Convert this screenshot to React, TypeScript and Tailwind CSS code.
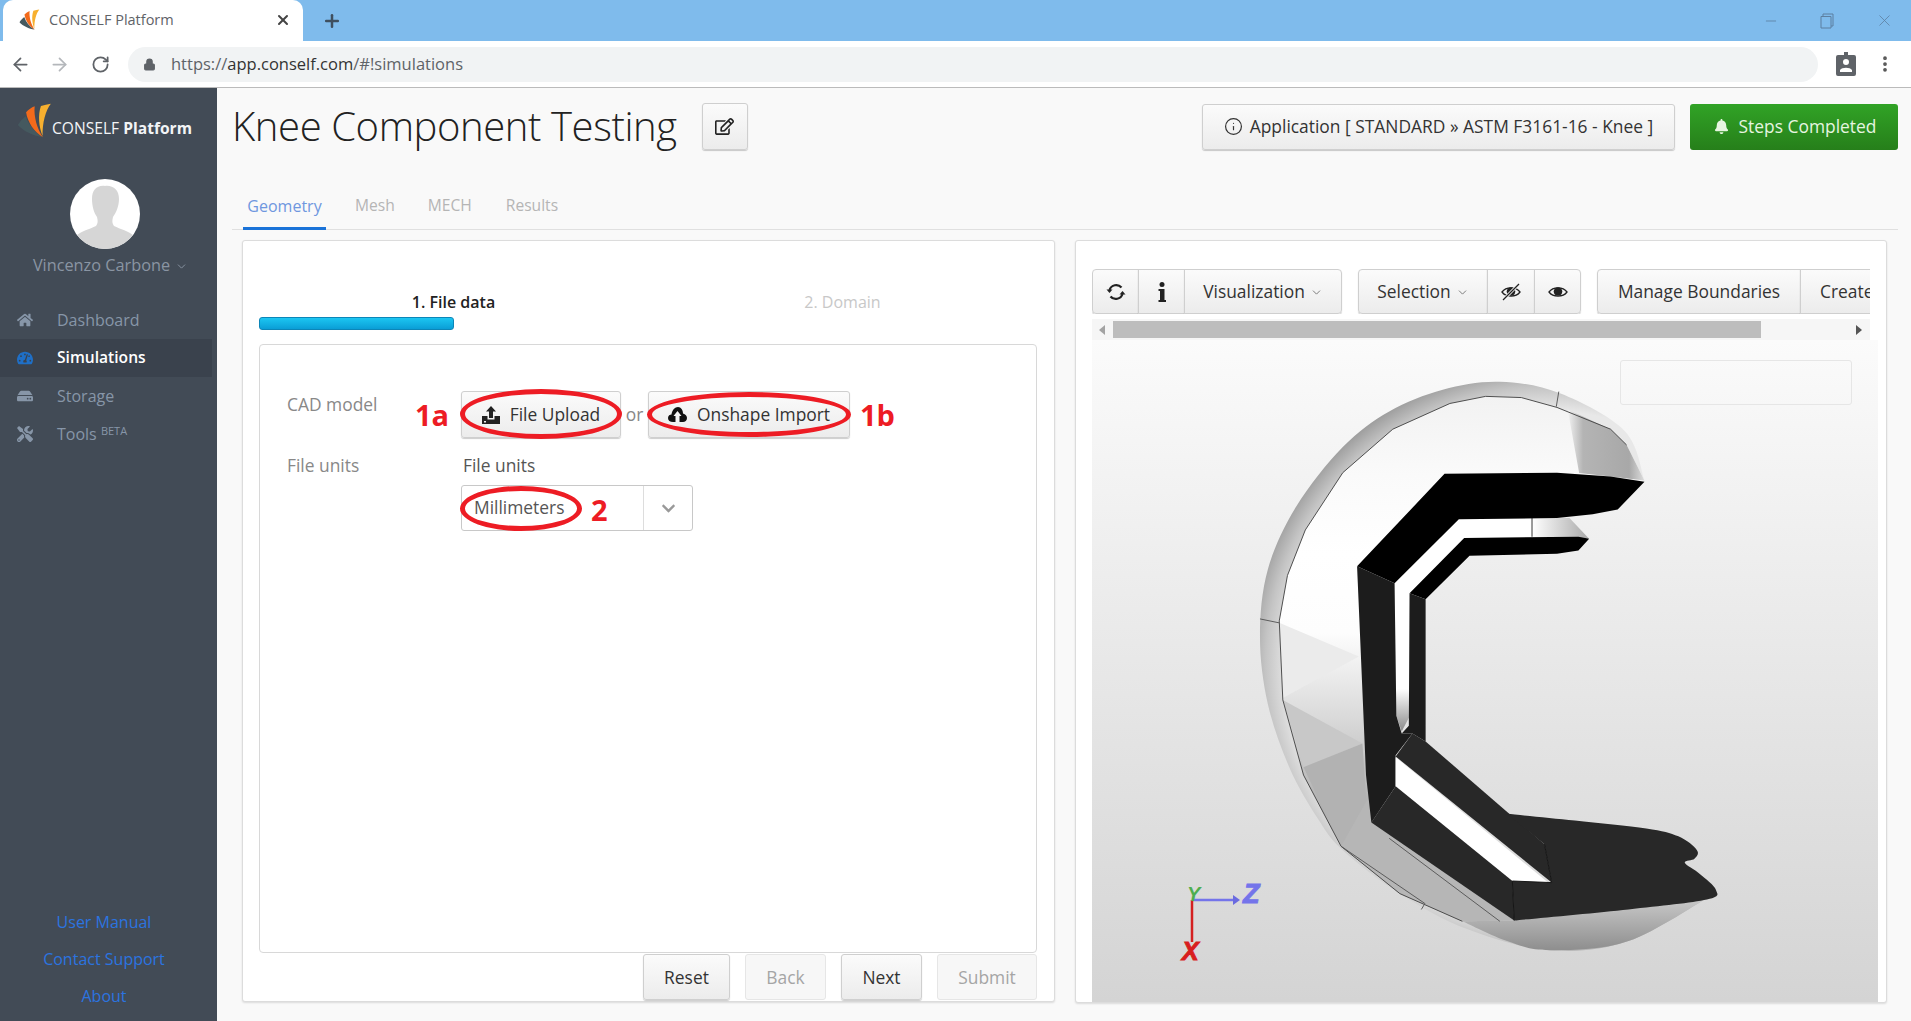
import { ArrowLeft, ArrowRight, ChevronDown, Info, Lock, Minus, MoreVertical, Plus, RotateCw, X } from "lucide-react";
import { FaBell, FaChevronDown, FaHdd, FaHome, FaRegEdit, FaTachometerAlt, FaTools } from "react-icons/fa";
import type { ReactNode } from "react";

const btn =
  "flex items-center justify-center border border-[#cfcfcf] bg-gradient-to-b from-[#fbfbfb] to-[#ececec] text-[#333] shadow-[0_1px_1px_rgba(0,0,0,0.2)]";

function Logo({ className }: { className: string }) {
  return (
    <svg viewBox="20 18 105 106" className={className}>
      <path d="M22 85 C28 75 36 65 46 58 C55 85 72 105 98 122 C70 118 40 105 22 85Z" fill="#45595f" />
      <path d="M47 46 C55 38 63 32 73 28 C70 60 80 95 98 122 C72 105 52 78 47 46Z" fill="#f26a1b" />
      <path d="M92 27 C102 24 112 22 122 20 C106 40 96 78 97 118 C86 90 82 55 92 27Z" fill="#f7b02f" />
    </svg>
  );
}

function RefreshIcon() {
  return (
    <svg viewBox="0 0 20 20" className="h-[20px] w-[20px]" fill="none" stroke="#222" strokeWidth="2.2">
      <path d="M3.5 8 A7 7 0 0 1 15.5 5.5" />
      <path d="M16.5 12 A7 7 0 0 1 4.5 14.5" />
      <path d="M0.5 7.5 H6.5 L3.5 11Z" fill="#222" stroke="none" />
      <path d="M13.5 12.5 H19.5 L16.5 9Z" fill="#222" stroke="none" />
    </svg>
  );
}

function InfoGlyph() {
  return (
    <svg viewBox="0 0 10 20" className="h-[20px] w-[10px]" fill="#222">
      <circle cx="5" cy="2.5" r="2.5" />
      <path d="M1.5 7 H7.5 V18 H9 V20 H1.5 V18 H3 V9 H1.5Z" />
    </svg>
  );
}

function EyeIcon({ slashed }: { slashed?: boolean }) {
  return (
    <svg viewBox="0 0 20 18" className="h-[18px] w-[20px]" fill="none" stroke="#222" strokeWidth="1.3">
      <path d="M1 9 C5 3.5 15 3.5 19 9 C15 14.5 5 14.5 1 9Z" />
      <circle cx="10" cy="8.5" r="4.3" fill="#222" stroke="none" />
      {slashed && <path d="M2 17 L18 1" stroke="#f4f4f4" strokeWidth="3" />}
      {slashed && <path d="M2 17 L18 1" />}
    </svg>
  );
}

function UploadIcon() {
  return (
    <svg viewBox="0 0 18 18" className="h-[18px] w-[18px]" fill="#222">
      <path d="M9 0 L14 5.5 H11 V12 H7 V5.5 H4Z" />
      <path d="M0 10 H5.5 V13.5 H12.5 V10 H18 V18 H0Z M2 15 V16.5 H4 V15Z" fillRule="evenodd" />
    </svg>
  );
}

function CloudUploadIcon() {
  return (
    <svg viewBox="0 0 19 16" className="h-[16px] w-[19px]" fill="#111">
      <path d="M5 15 C2 15 0 13.5 0 11 C0 8.5 2 7.5 3.5 7.5 C4 3 7 0 10 0 C13 0 15 3 15 6.5 C17.5 7 19 9 19 11 C19 13.5 17 15 15 15Z" />
      <path d="M9.5 4 L13.5 9 H11.5 V15 H7.5 V9 H5.5Z" fill="#f5f5f5" />
    </svg>
  );
}

function NavItem({ icon, label, active }: { icon: ReactNode; label: ReactNode; active?: boolean }) {
  return (
    <div
      className={`flex h-[38px] w-[212px] items-center gap-[24px] pl-[17px] ${
        active ? "bg-[#3a424d] text-[15.6px] font-semibold text-white" : "text-[16px] text-[#8796a8]"
      }`}
    >
      <span className="flex w-[16px] justify-center text-[16px]">{icon}</span>
      <span>{label}</span>
    </div>
  );
}

function Sidebar() {
  return (
    <aside className="flex w-[217px] shrink-0 flex-col bg-[#424b56]">
      <div className="flex h-[50px] items-end pl-[17px] pt-[15px]">
        <Logo className="h-[35px] w-[35px]" />
        <span className="mb-[-2px] whitespace-nowrap text-[15.6px] text-[#f2f4f6]">
          CONSELF <b>Platform</b>
        </span>
      </div>
      <div className="mt-[41px] flex flex-col items-center">
        <div className="mr-[7px] h-[70px] w-[70px] overflow-hidden rounded-full bg-white">
          <svg viewBox="0 0 70 70" className="h-full w-full">
            <path
              d="M35 7 C27 6 22 11 22 20 C22 27 24 34 27 38 C28 42 28 44 26 47 C20 50 11 52 6 57 L6 70 L64 70 L64 57 C59 52 50 50 44 47 C42 44 42 42 43 38 C46 34 49 27 49 20 C49 11 43 6 35 7Z"
              fill="#d6d6d6"
            />
          </svg>
        </div>
        <div className="ml-[4px] mt-[5px] flex items-center gap-[5px] text-[16.3px] leading-[22px] text-[#8a95a3]">
          Vincenzo Carbone
          <ChevronDown className="mt-[2px] h-[13px] w-[13px]" strokeWidth={1.75} />
        </div>
      </div>
      <nav className="mt-[25px] flex flex-col">
        <NavItem icon={<FaHome />} label="Dashboard" />
        <NavItem icon={<FaTachometerAlt className="text-[#1f6fc6]" />} label="Simulations" active />
        <NavItem icon={<FaHdd />} label="Storage" />
        <NavItem
          icon={<FaTools />}
          label={
            <>
              Tools <sup className="text-[11px]">BETA</sup>
            </>
          }
        />
      </nav>
      <div className="mt-auto flex flex-col items-center gap-[15px] pb-[14px] pr-[9px] text-[16px] leading-[22px] text-[#2b74e0]">
        <a>User Manual</a>
        <a>Contact Support</a>
        <a>About</a>
      </div>
    </aside>
  );
}

function Ellipse({ className }: { className: string }) {
  return <span className={`absolute rounded-[50%] border-[5px] border-[#ed1c24] ${className}`} />;
}

function Note({ children, className }: { children: ReactNode; className?: string }) {
  return <span className={`text-[29px] font-bold leading-none text-[#ed1c24] ${className ?? ""}`}>{children}</span>;
}

function GeometryPanel() {
  return (
    <section className="flex h-[762px] w-[813px] shrink-0 flex-col rounded-[3px] border border-[#dcdcdc] bg-white pl-[16px] pr-[17px] shadow-[0_1px_2px_rgba(0,0,0,0.12)]">
      <div className="mt-[50px] grid grid-cols-2 text-center text-[16px] leading-[22px]">
        <span className="font-semibold text-[#222]">1. File data</span>
        <span className="text-[#c8c8c8]">2. Domain</span>
      </div>
      <div className="mt-[4px] h-[13px] w-[195px] rounded-[3px] border border-[#0c86b8] bg-gradient-to-b from-[#1cc6f2] to-[#0a9ed6]" />
      <div className="mt-[14px] h-[609px] rounded-[4px] border border-[#d8d8d8] bg-white pl-[27px] pt-[46px] text-[17.4px] text-[#888]">
        <div className="flex h-[47px]">
          <span className="mt-[1px] w-[128px] leading-[24px]">CAD model</span>
          <Note className="mt-[9px] w-[46px]">1a</Note>
          <div className={`${btn} relative h-[47px] w-[160px] gap-[10px] rounded-[3px]`}>
            <UploadIcon />
            File Upload
            <Ellipse className="inset-x-[-2px] inset-y-[-3px] h-[50px]" />
          </div>
          <span className="w-[27px] pt-[10px] text-center">or</span>
          <div className={`${btn} relative h-[47px] w-[202px] gap-[10px] rounded-[3px]`}>
            <CloudUploadIcon />
            Onshape Import
            <Ellipse className="inset-x-[-2px] inset-y-0" />
          </div>
          <Note className="ml-[10px] mt-[9px]">1b</Note>
        </div>
        <div className="mt-[15px] flex">
          <span className="w-[174px] leading-[24px]">File units</span>
          <div className="flex flex-col">
            <span className="pl-[2px] leading-[24px] text-[#555]">File units</span>
            <div className="relative mt-[8px] flex h-[46px] w-[232px] items-center rounded-[3px] border border-[#c8c8c8] bg-white pb-[2px] pl-[12px] text-[#555]">
              Millimeters
              <span className="ml-auto flex h-[44px] w-[49px] items-center justify-center self-start border-l border-[#ddd]">
                <FaChevronDown className="text-[15px] text-[#999]" />
              </span>
              <Ellipse className="left-[-2px] top-0 h-[45px] w-[122px]" />
              <Note className="absolute left-[129px] top-[9px]">2</Note>
            </div>
          </div>
        </div>
      </div>
      <div className="mt-px flex justify-end gap-[14px] text-[17.4px]">
        <div className={`${btn} mr-px h-[46px] w-[87px] rounded-[3px] border-[#c4c4c4] text-[#222]`}>Reset</div>
        <div className="mr-px flex h-[46px] w-[81px] items-center justify-center rounded-[3px] border border-[#e6e6e6] bg-[#f7f7f7] text-[#a5a5a5]">Back</div>
        <div className={`${btn} h-[46px] w-[81px] rounded-[3px] border-[#c4c4c4] text-[#222]`}>Next</div>
        <div className="ml-px flex h-[46px] w-[100px] items-center justify-center rounded-[3px] border border-[#e6e6e6] bg-[#f7f7f7] text-[#a5a5a5]">Submit</div>
      </div>
    </section>
  );
}

function Toolbar() {
  const chevron = <ChevronDown className="ml-[5px] mt-[2px] h-[13px] w-[13px] text-[#777]" strokeWidth={1.75} />;
  return (
    <div className="flex h-[45px] w-[778px] gap-[16px] overflow-hidden text-[17.4px]">
      <div className="flex shrink-0">
        <div className={`${btn} h-[45px] w-[47px] rounded-l-[4px]`}>
          <RefreshIcon />
        </div>
        <div className={`${btn} ml-[-1px] h-[45px] w-[47px]`}>
          <InfoGlyph />
        </div>
        <div className={`${btn} ml-[-1px] h-[45px] w-[158px] rounded-r-[4px]`}>Visualization{chevron}</div>
      </div>
      <div className="flex shrink-0">
        <div className={`${btn} h-[45px] w-[130px] rounded-l-[4px]`}>Selection{chevron}</div>
        <div className={`${btn} ml-[-1px] h-[45px] w-[48px]`}>
          <EyeIcon slashed />
        </div>
        <div className={`${btn} ml-[-1px] h-[45px] w-[47px] rounded-r-[4px]`}>
          <EyeIcon />
        </div>
      </div>
      <div className="flex shrink-0">
        <div className={`${btn} h-[45px] w-[204px] rounded-l-[4px]`}>Manage Boundaries</div>
        <div className={`${btn} ml-[-1px] h-[45px] w-[130px] justify-start pl-[19px]`}>Create</div>
      </div>
    </div>
  );
}

// Smooth open curve through the points (Catmull-Rom)
function smooth(p: number[][]) {
  let d = `M${p[0][0]} ${p[0][1]}`;
  for (let i = 0; i < p.length - 1; i++) {
    const a = p[Math.max(i - 1, 0)];
    const b = p[i];
    const c = p[i + 1];
    const e = p[Math.min(i + 2, p.length - 1)];
    d += `C${b[0] + (c[0] - a[0]) / 6} ${b[1] + (c[1] - a[1]) / 6} ${c[0] - (e[0] - b[0]) / 6} ${c[1] - (e[1] - b[1]) / 6} ${c[0]} ${c[1]}`;
  }
  return d;
}

const outer = [
  [1245, 305], [1190, 180], [1010, 85], [840, 55], [680, 75], [530, 130], [400, 220], [270, 370], [190, 530],
  [168, 700], [190, 870], [250, 1030], [330, 1160], [400, 1240], [560, 1350], [750, 1440], [980, 1493],
  [1200, 1470], [1440, 1350],
];

const edge =
  "1195,215 1150,175 1000,120 900,95 800,92 700,110 540,175 400,285 295,430 245,545 222,660 232,860 290,1050 395,1230 560,1350 735,1420";

function Model() {
  return (
    <svg viewBox="1092 340 786 662" className="absolute inset-0 h-full w-full">
      <defs>
        <radialGradient
          id="rim"
          gradientUnits="userSpaceOnUse"
          cx="0"
          cy="0"
          r="1"
          gradientTransform="translate(964 774) scale(840 760)"
        >
          <stop offset="0.85" stopColor="#e8e8e8" />
          <stop offset="0.93" stopColor="#c4c4c4" />
          <stop offset="1" stopColor="#9a9a9a" />
        </radialGradient>
        <linearGradient id="face" x1="0" y1="0" x2="0" y2="1">
          <stop offset="0" stopColor="#f2f2f2" />
          <stop offset="0.15" stopColor="#fafafa" />
          <stop offset="0.3" stopColor="#ffffff" />
          <stop offset="0.45" stopColor="#fdfdfd" />
          <stop offset="0.62" stopColor="#d8d8d8" />
          <stop offset="0.78" stopColor="#b0b0b0" />
          <stop offset="1" stopColor="#bcbcbc" />
        </linearGradient>
        <linearGradient id="cap" x1="0" y1="0" x2="1" y2="0">
          <stop offset="0" stopColor="#f2f2f2" />
          <stop offset="0.2" stopColor="#b4b4b4" />
          <stop offset="0.8" stopColor="#a8a8a8" />
          <stop offset="1" stopColor="#dddddd" />
        </linearGradient>
        <linearGradient id="slot" x1="0" y1="0" x2="0" y2="1">
          <stop offset="0.8" stopColor="#ffffff" />
          <stop offset="1" stopColor="#8a8a8a" />
        </linearGradient>
        <linearGradient id="tip" x1="0" y1="0" x2="1" y2="0">
          <stop offset="0" stopColor="#ffffff" />
          <stop offset="1" stopColor="#a8a8a8" />
        </linearGradient>
        <linearGradient id="belly" x1="0" y1="0" x2="0" y2="1">
          <stop offset="0" stopColor="#cfcfcf" />
          <stop offset="1" stopColor="#8e8e8e" />
        </linearGradient>
      </defs>
      <g transform="translate(1200 360) scale(0.357 0.3953)">
        <path d={smooth(outer) + "L880 1400 L480 1000 L500 500 L800 290Z"} fill="url(#rim)" />
        <path d={smooth([[735, 1420], [860, 1470], [980, 1493], [1200, 1470], [1440, 1350]]) + "L1200 1385 L880 1418Z"} fill="url(#belly)" />
        <polygon points={`1245,305 ${edge} 880,1418 480,1170 440,522 685,288`} fill="url(#face)" />
        <polygon points="1030,125 1150,175 1195,215 1245,305 1150,295 1062,286" fill="url(#cap)" />
        <polygon points="222,665 445,750 232,855" fill="#ebebeb" />
        <polygon points="232,860 455,970 290,1030" fill="#c8c8c8" />
        <polygon points="290,1030 455,970 470,1170 395,1230" fill="#b2b2b2" />
        <polygon points="395,1230 470,1110 880,1418 735,1420 560,1350" fill="#b6b6b6" />
        <polyline points={edge} fill="none" stroke="#444" strokeWidth="2.5" />
        <path
          d="M168 655 L222 665 M1005 80 L998 118 M395 1230 L630 1375 L620 1390 M530 1210 L840 1420"
          stroke="#555"
          strokeWidth="2.5"
          fill="none"
        />
        {/* white opening behind the C */}
        <polygon points="725,403 1030,400 1090,452 740,450 587,590 588,900 565,940 550,900 545,565" fill="url(#slot)" />
        <polygon points="930,400 1035,400 1090,452 930,447" fill="url(#tip)" />
        <path d="M930 400 L930 447" stroke="#444" strokeWidth="3" />
        {/* top bands */}
        <polygon points="685,288 1000,285 1150,295 1245,308 1170,378 1100,390 1000,400 725,403 545,565 440,522" fill="#000" />
        <polygon points="740,450 1060,447 1090,452 1060,482 1000,490 755,495 632,605 587,590" fill="#000" />
        {/* vertical bands */}
        <polygon points="440,522 545,565 550,900 565,945 595,945 548,1000 548,1078 480,1170 465,1050" fill="#1c1c1c" />
        <polygon points="587,590 632,605 632,965 595,945 565,945 585,925" fill="#1c1c1c" />
        {/* lower arms and foot */}
        <polygon points="595,945 632,965 965,1225 985,1322 548,1003" fill="#282828" />
        <polygon points="548,1005 975,1322 875,1318 548,1078" fill="#ffffff" />
        <polygon points="548,1078 875,1318 880,1418 480,1170" fill="#282828" />
        <path
          d={
            smooth([
              [860, 1148], [1050, 1165], [1250, 1185], [1340, 1205], [1392, 1240], [1385, 1262], [1358, 1272], [1400, 1300],
              [1445, 1340], [1420, 1365], [1200, 1390], [880, 1418],
            ]) + "L875 1318 L985 1322 L965 1225Z"
          }
          fill="#282828"
        />
        <path d="M875 1318 L880 1418 M965 1225 L985 1322 L875 1318" stroke="#111" strokeWidth="2.5" fill="none" />
      </g>
      {/* axes */}
      <path d="M1192 900 L1235 900" stroke="#7474ea" strokeWidth="2.5" />
      <path d="M1233 895 L1240 900 L1233 905Z" fill="#6a6ae0" />
      <path d="M1192 900 L1192 942" stroke="#d42020" strokeWidth="2.5" />
      <text x="1187" y="901" fontFamily="Liberation Sans" fontWeight="700" fontStyle="italic" fontSize="20" fill="#4fae4f">Y</text>
      <text x="1243" y="903" fontFamily="Liberation Sans" fontWeight="700" fontStyle="italic" fontSize="27" fill="#7474ea" stroke="#7474ea">Z</text>
      <text x="1182" y="960" fontFamily="Liberation Sans" fontWeight="700" fontStyle="italic" fontSize="25" fill="#d81e1e" stroke="#d81e1e">X</text>
    </svg>
  );
}

function ViewerPanel() {
  return (
    <section className="flex h-[763px] w-[812px] shrink-0 flex-col rounded-[3px] border border-[#dcdcdc] bg-white pl-[16px] pt-[28px] shadow-[0_1px_2px_rgba(0,0,0,0.12)]">
      <Toolbar />
      <div className="mt-[5px] flex h-[21px] w-[778px] items-center bg-[#f6f6f6] pl-[7px] pr-[8px]">
        <span className="h-0 w-0 border-y-[5px] border-r-[6px] border-y-transparent border-r-[#a3a3a3]" />
        <span className="ml-[8px] h-[17px] w-[648px] bg-[#bdbdbd]" />
        <span className="ml-auto h-0 w-0 border-y-[5px] border-l-[6px] border-y-transparent border-l-[#555]" />
      </div>
      <div className="relative h-[662px] w-[786px] bg-gradient-to-b from-[#fbfbfb] to-[#d4d4d4]">
        <Model />
        <div className="absolute left-[528px] top-[20px] h-[45px] w-[232px] rounded-[3px] border border-[#e6e6e6]" />
      </div>
    </section>
  );
}

export default function App() {
  return (
    <div className="flex h-[1021px] w-[1911px] flex-col overflow-hidden bg-[#f9f9f9] font-['Open_Sans',sans-serif]">
      <div className="flex h-[41px] shrink-0 items-center bg-[#7fbbec] pl-[3px] text-[#555]">
        <div className="flex h-[41px] w-[300px] items-center rounded-t-[10px] bg-white pb-[2px] pl-[16px] pr-[12px]">
          <Logo className="h-[21px] w-[21px]" />
          <span className="ml-[9px] text-[14.5px] text-[#5f6368]">CONSELF Platform</span>
          <X className="ml-auto h-[16px] w-[16px] text-[#444]" strokeWidth={3} />
        </div>
        <Plus className="ml-[19px] h-[20px] w-[20px] text-[#3f4f5f]" strokeWidth={3} />
        <div className="ml-auto flex items-center gap-[41px] pr-[17px] text-[#5d7fa0]">
          <Minus className="h-[16px] w-[16px]" strokeWidth={1.25} />
          <svg viewBox="0 0 14 16" className="h-[16px] w-[14px]" fill="none" stroke="currentColor">
            <path d="M3 3 V1 H13 V13 H11 M1 3.5 H11 V15 H1Z" />
          </svg>
          <X className="h-[19px] w-[19px]" strokeWidth={1} />
        </div>
      </div>
      <div className="flex h-[47px] shrink-0 items-center border-b border-[#bbb] bg-white text-[#5f6368]">
        <ArrowLeft className="ml-[10px] h-[21px] w-[21px]" strokeWidth={2} />
        <ArrowRight className="ml-[18px] h-[21px] w-[21px] text-[#b4b7bb]" strokeWidth={2} />
        <RotateCw className="ml-[21px] h-[19px] w-[19px]" strokeWidth={2.25} />
        <div className="ml-[18px] flex h-[35px] w-[1690px] items-center rounded-full bg-[#f1f3f4] pl-[15px] text-[16.5px]">
          <Lock className="h-[13px] w-[13px] fill-[#5f6368]" />
          <span className="ml-[15px]">
            https://<span className="text-[#333]">app.conself.com</span>/#!simulations
          </span>
        </div>
        <svg viewBox="0 0 20 24" className="ml-[18px] h-[24px] w-[20px]">
          <path
            fill="#5f6368"
            d="M8 0H12V3H18Q20 3 20 5V22Q20 24 18 24H2Q0 24 0 22V5Q0 3 2 3H8ZM10 7A3 3 0 1 0 10 13 3 3 0 0 0 10 7ZM4 20H16V18C14 15 6 15 4 18Z"
          />
        </svg>
        <MoreVertical className="ml-[19px] h-[20px] w-[20px] text-[#555]" strokeWidth={2.5} />
      </div>
      <div className="flex min-h-0 flex-1">
        <Sidebar />
        <main className="flex min-w-0 flex-1 flex-col pl-[15px] pr-[13px]">
          <header className="flex h-[62px] shrink-0 items-end justify-between">
            <div className="flex items-center">
              <h1 className="mb-[1px] text-[40px] font-light leading-[47px] tracking-[-0.4px] text-[#222]">Knee Component Testing</h1>
              <div className={`${btn} ml-[25px] h-[47px] w-[46px] rounded-[3px]`}>
                <FaRegEdit className="text-[19px] text-[#222]" />
              </div>
            </div>
            <div className="flex gap-[15px] text-[17.4px]">
              <div className={`${btn} h-[46px] w-[473px] gap-[7px] rounded-[3px] pb-[2px]`}>
                <Info className="h-[19px] w-[19px]" strokeWidth={1.5} />
                Application [ STANDARD » ASTM F3161-16 - Knee ]
              </div>
              <div className="flex h-[46px] w-[208px] items-center justify-center gap-[10px] rounded-[3px] bg-gradient-to-b from-[#31a326] to-[#267f1a] pb-[2px] pl-[2px] text-[#e6f5e0]">
                <FaBell className="text-[15px]" />
                Steps Completed
              </div>
            </div>
          </header>
          <nav className="mt-[41px] flex h-[39px] shrink-0 items-center gap-[33px] border-b border-[#e0e0e0] pb-[9px] pl-[11px] text-[15.6px] text-[#b5b5b5]">
            <span className="mb-[-9px] mr-[-4px] flex h-[39px] w-[83px] items-center justify-center border-b-[3px] border-[#1a73d8] pb-[6px] text-[16px] text-[#6f97df]">
              Geometry
            </span>
            <span>Mesh</span>
            <span>MECH</span>
            <span className="ml-px">Results</span>
          </nav>
          <div className="mt-[10px] flex gap-[20px] pl-[10px]">
            <GeometryPanel />
            <ViewerPanel />
          </div>
        </main>
      </div>
    </div>
  );
}
